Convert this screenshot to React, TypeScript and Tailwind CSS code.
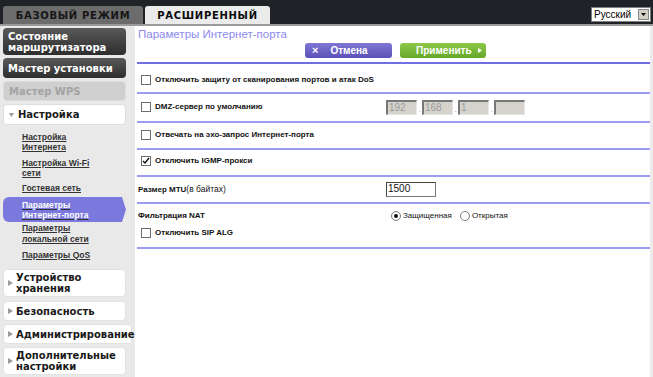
import React from "react";

const F = { fontFamily: '"Liberation Sans", Arial, sans-serif' };
const V = { fontFamily: '"DejaVu Sans", Verdana, sans-serif' };

function Cb({ checked = false }: { checked?: boolean }) {
  return (
    <span className="inline-flex w-[10px] h-[10px] border border-[#6e6e6e] bg-white items-center justify-center shrink-0">
      {checked && (
        <svg width="8" height="8" viewBox="0 0 8 8">
          <path d="M1 4 L3 6 L7 1" stroke="#111" strokeWidth="1.4" fill="none" />
        </svg>
      )}
    </span>
  );
}

function Radio({ checked = false }: { checked?: boolean }) {
  return (
    <span className="inline-flex w-[10px] h-[10px] rounded-full border border-[#7a7a7a] bg-white items-center justify-center shrink-0">
      {checked && <span className="w-[4px] h-[4px] rounded-full bg-[#111]" />}
    </span>
  );
}

function Line() {
  return <div className="h-[2px] bg-[#9c9cf0] mr-[3px]" />;
}

function Tri() {
  return (
    <svg width="5" height="6" viewBox="0 0 5 6" className="shrink-0">
      <path d="M0 0 L5 3 L0 6 Z" fill="#9a9a9a" />
    </svg>
  );
}

function IpBox({ v }: { v: string }) {
  return (
    <span className="inline-flex w-[31px] h-[15px] bg-[#d6d3cd] border-t-2 border-l-2 border-t-[#777] border-l-[#777] border-b border-r border-b-[#e8e6e2] border-r-[#e8e6e2] text-[10px] text-[#9a9a9a] items-center pl-[1px] leading-none">
      {v}
    </span>
  );
}

function Dot() {
  return <span className="w-[5px] text-center text-[#888] text-[8px] leading-none pb-[1px]">.</span>;
}

export default function App() {
  return (
    <div className="w-[653px] h-[377px] overflow-hidden bg-[#e9e9e9] flex flex-col" style={F}>
      {/* header */}
      <div className="h-[24px] bg-[#1f2328] flex items-end pl-[3px] relative shrink-0">
        <div className="h-[18px] w-[140px] bg-[#6c6c6c] rounded-t-[3px] flex items-center justify-center text-[10px] font-bold tracking-[0.7px] text-[#161616]" style={V}>
          БАЗОВЫЙ РЕЖИМ
        </div>
        <div className="h-[18px] w-[125px] ml-[2px] bg-[#ebebeb] rounded-t-[3px] flex items-center justify-center text-[10px] font-bold tracking-[0.7px] text-[#0a0a0a]" style={V}>
          РАСШИРЕННЫЙ
        </div>
        <div className="absolute right-[2px] top-[7px] w-[60px] h-[15px] bg-white border border-[#7f7f7f] flex items-center">
          <span className="text-[10px] text-black pl-[2px] flex-1 leading-none">Русский</span>
          <span className="w-[11px] h-[11px] mr-[1px] bg-[#d4d0c8] border border-[#888] flex items-center justify-center">
            <svg width="5" height="3" viewBox="0 0 5 3">
              <path d="M0 0 L5 0 L2.5 3 Z" fill="#000" />
            </svg>
          </span>
        </div>
      </div>
      <div className="h-[2px] bg-[#9a9a9a] shrink-0" />
      <div className="flex flex-1 min-h-0">
        {/* sidebar */}
        <div className="w-[135px] shrink-0 bg-[#e9e9e9] flex flex-col pl-[3px] pt-[2px]">
          <div className="w-[123px] h-[27px] rounded-[4px] bg-gradient-to-b from-[#5a5a5a] to-[#2e2e2e] text-white text-[10px] font-bold leading-[11px] px-[5px] flex flex-col justify-center" style={V}>
            <span>Состояние</span>
            <span>маршрутизатора</span>
          </div>
          <div className="w-[123px] h-[20px] mt-[3px] rounded-[4px] bg-gradient-to-b from-[#5a5a5a] to-[#2e2e2e] text-white text-[10px] font-bold px-[5px] flex items-center" style={V}>
            Мастер установки
          </div>
          <div className="w-[123px] h-[20px] mt-[3px] rounded-[4px] bg-[#cfcfcf] border border-[#dcdcdc] text-[#a3a3a3] text-[10px] font-bold px-[5px] flex items-center" style={V}>
            Мастер WPS
          </div>
          <div className="w-[123px] h-[21px] mt-[3px] rounded-[4px] bg-white border border-[#dedede] text-[#1a1a1a] text-[10px] font-bold px-[5px] flex items-center gap-[4px]" style={V}>
            <svg width="5" height="4" viewBox="0 0 5 4">
              <path d="M0 0 L5 0 L2.5 4 Z" fill="#9a9a9a" />
            </svg>
            Настройка
          </div>
          <div className="flex flex-col text-[8.5px] font-bold text-[#333] underline leading-[10px] mt-[7px]">
            <div className="pl-[19px]">Настройка<br />Интернета</div>
            <div className="pl-[19px] pt-[6px]">Настройка Wi-Fi<br />сети</div>
            <div className="pl-[19px] pt-[5px]">Гостевая сеть</div>
            <div className="relative mt-[4px] w-[123px] h-[25px] flex items-center">
              <div className="absolute inset-0 flex">
                <div className="flex-1 bg-[#7b79de] rounded-l-[6px]" />
                <svg width="6" height="25" viewBox="0 0 6 25" className="shrink-0">
                  <path d="M0 0 L2 0 L6 12.5 L2 25 L0 25 Z" fill="#7b79de" />
                </svg>
              </div>
              <div className="relative pl-[19px] text-white">Параметры<br />Интернет-порта</div>
            </div>
            <div className="pl-[19px] pt-[1px] leading-[11px]">Параметры<br />локальной сети</div>
            <div className="pl-[19px] pt-[5px]">Параметры QoS</div>
          </div>
          <div className="w-[123px] h-[28px] mt-[9px] rounded-[4px] bg-white border border-[#e2e2e2] text-[#1a1a1a] text-[10px] font-bold px-[4px] flex items-center gap-[3px]" style={V}>
            <Tri />
            <span className="leading-[11px]">Устройство<br />хранения</span>
          </div>
          <div className="w-[123px] h-[20px] mt-[4px] rounded-[4px] bg-white border border-[#e2e2e2] text-[#1a1a1a] text-[10px] font-bold px-[4px] flex items-center gap-[3px]" style={V}>
            <Tri />
            Безопасность
          </div>
          <div className="w-[129px] h-[20px] mt-[3px] rounded-[4px] bg-white border border-[#e2e2e2] text-[#1a1a1a] text-[10px] font-bold px-[4px] flex items-center gap-[3px] whitespace-nowrap" style={V}>
            <Tri />
            Администрирование
          </div>
          <div className="w-[123px] h-[28px] mt-[3px] rounded-[4px] bg-white border border-[#e2e2e2] text-[#1a1a1a] text-[10px] font-bold px-[4px] flex items-center gap-[3px]" style={V}>
            <Tri />
            <span className="leading-[11px]">Дополнительные<br />настройки</span>
          </div>
        </div>
        {/* content */}
        <div className="flex-1 bg-white relative flex flex-col pl-[2px]">
          <div className="text-[11.5px] text-[#8b89ee] leading-none pt-[3px] pl-[1px]">
            Параметры Интернет-порта
          </div>
          <div className="flex gap-[8px] pl-[168px] mt-[2px]">
            <div className="w-[87px] h-[15px] rounded-[3px] bg-gradient-to-b from-[#8077d4] to-[#5b50b8] text-white text-[10px] font-bold flex items-center px-[7px]">
              <span className="text-[11px] mr-[12px]">×</span>Отмена
            </div>
            <div className="w-[86px] h-[15px] rounded-[3px] bg-gradient-to-b from-[#8cc84a] to-[#66a82a] text-white text-[10px] font-bold flex items-center pl-[16px] gap-[6px]">
              Применить
              <svg width="4" height="5" viewBox="0 0 4 5"><path d="M0 0 L4 2.5 L0 5 Z" fill="#fff" /></svg>
            </div>
          </div>
          <div className="h-[2px] bg-[#6f6fe2] mt-[4px] mr-[3px]" />
          <div className="text-[8px] font-bold text-[#111]">
            <div className="h-[28px] flex items-center gap-[4px] pl-[4px] pt-[4px]">
              <Cb /> Отключить защиту от сканирования портов и атак DoS
            </div>
            <Line />
            <div className="h-[27px] flex items-center pl-[4px]">
              <div className="flex items-center gap-[4px] w-[245px]">
                <Cb /> DMZ-сервер по умолчанию
              </div>
              <div className="flex items-end font-normal">
                <IpBox v="192" />
                <Dot />
                <IpBox v="168" />
                <Dot />
                <IpBox v="1" />
                <Dot />
                <IpBox v="" />
              </div>
            </div>
            <Line />
            <div className="h-[25px] flex items-center gap-[4px] pl-[4px]">
              <Cb /> Отвечать на эхо-запрос Интернет-порта
            </div>
            <Line />
            <div className="h-[25px] flex items-center gap-[4px] pl-[4px] pb-[3px]">
              <Cb checked /> Отключить IGMP-прокси
            </div>
            <Line />
            <div className="h-[25px] flex items-center pl-[1px]">
              <div className="w-[248px]">
                Размер MTU<span className="font-normal text-[8.5px]">(в байтах)</span>
              </div>
              <span className="w-[50px] h-[15px] border border-[#7a7a7a] border-t-[#444] border-l-[#444] bg-white text-[10px] font-normal flex items-center pl-[1px] leading-none">
                1500
              </span>
            </div>
            <Line />
            <div className="h-[43px] flex flex-col">
              <div className="flex items-center pl-[1px] pt-[6px]">
                <div className="w-[253px]">Фильтрация NAT</div>
                <div className="flex items-center gap-[2px] font-normal text-[8px]">
                  <Radio checked /> Защищенная
                  <span className="w-[4px]" />
                  <Radio /> Открытая
                </div>
              </div>
              <div className="h-[20px] flex items-center gap-[4px] pl-[4px] pt-[2px]">
                <Cb /> Отключить SIP ALG
              </div>
            </div>
            <Line />
          </div>
          <div className="absolute right-0 top-0 bottom-0 w-[3px] bg-[#ececec]" />
        </div>
      </div>
    </div>
  );
}
